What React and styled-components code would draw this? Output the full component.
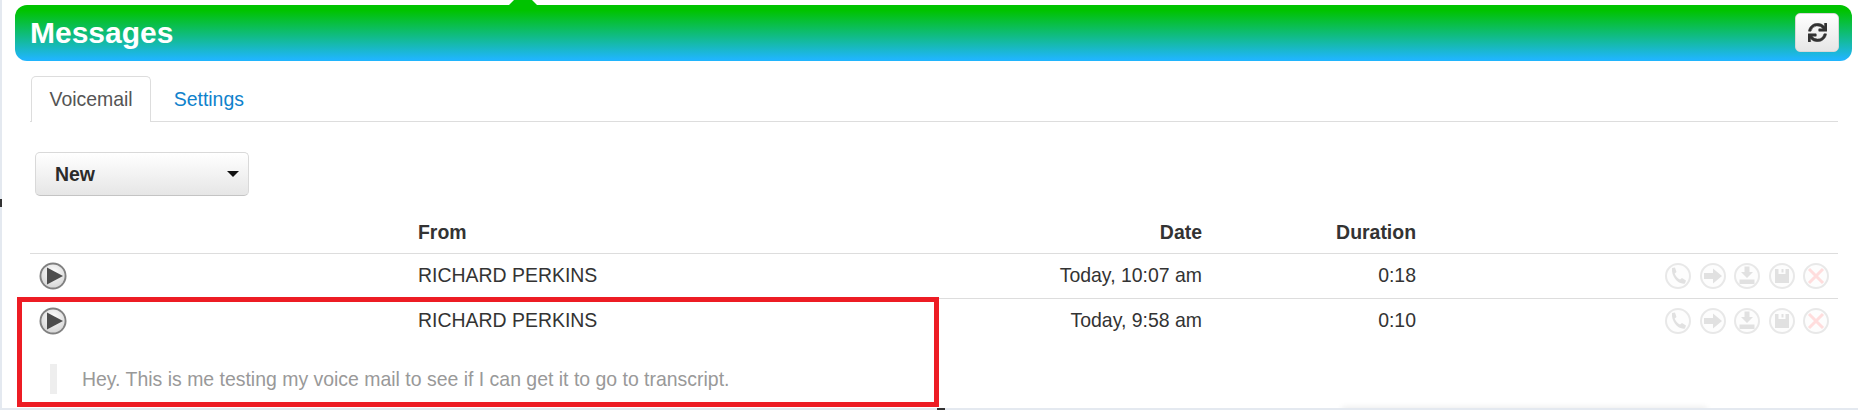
import React from "react";
import styled, { createGlobalStyle } from "styled-components";
import { FaSync } from "react-icons/fa";

const GlobalStyle = createGlobalStyle`
  html, body {
    margin: 0;
    padding: 0;
    background: #e4e9f0;
    overflow: hidden;
  }
  body {
    font-family: "Liberation Sans", Arial, sans-serif;
    font-size: 19.45px;
    color: #333;
  }
`;

const Screen = styled.div`
  position: relative;
  width: 1858px;
  height: 410px;
  padding-left: 2px;
  box-sizing: border-box;
`;

const Page = styled.div`
  position: relative;
  width: 1856px;
  height: 408px;
  background: #fff;
  padding: 5px 6px 0 13px;
  box-sizing: border-box;
  overflow: hidden;
`;

const Header = styled.div`
  position: relative;
  height: 56px;
  border-radius: 12px;
  background: linear-gradient(#00c300 10%, #20b5fd 97%);
  display: flex;
  align-items: center;
  justify-content: space-between;
  padding: 0 13px 0 15px;
`;

const Notch = styled.span`
  position: absolute;
  top: -14px;
  left: 489px;
  border-left: 19px solid transparent;
  border-right: 19px solid transparent;
  border-bottom: 19px solid #00c300;
`;

const Title = styled.h1`
  margin: 0;
  font-size: 30px;
  font-weight: bold;
  color: #fff;
`;

const RefreshButton = styled.button`
  width: 44px;
  height: 39px;
  margin-top: -1px;
  padding: 0;
  border: 1px solid #d8d8d8;
  border-radius: 5px;
  background: linear-gradient(#fff, #e6e6e6);
  color: #333;
  display: flex;
  align-items: center;
  justify-content: center;
  font-size: 19px;
  svg {
    stroke: #333;
    stroke-width: 12px;
  }
`;

const Body = styled.div`
  margin-right: 14px;
  padding-left: 15px;
`;

const Tabs = styled.div`
  display: flex;
  gap: 4px;
  height: 61px;
  padding: 15px 0 0 1px;
  box-sizing: border-box;
  border-bottom: 1px solid #ddd;
`;

const Tab = styled.div`
  height: 46px;
  padding: 0 17.5px;
  box-sizing: border-box;
  display: flex;
  align-items: center;
  color: ${(p) => (p.$active ? "#555" : "#0f82cc")};
  background: ${(p) => (p.$active ? "#fff" : "transparent")};
  border: 1px solid ${(p) => (p.$active ? "#ddd" : "transparent")};
  border-bottom: none;
  border-radius: 5px 5px 0 0;
`;

const Select = styled.div`
  width: 214px;
  height: 44px;
  margin: 30px 0 0 5px;
  padding: 0 9px 0 19px;
  box-sizing: border-box;
  display: flex;
  align-items: center;
  justify-content: space-between;
  border: 1px solid #d9d9d9;
  border-bottom-color: #c4c4c4;
  border-radius: 5px;
  background: linear-gradient(#fff, #e6e6e6);
  font-weight: bold;
  color: #2b2b2b;
`;

const Caret = styled.span`
  border-left: 6px solid transparent;
  border-right: 6px solid transparent;
  border-top: 6px solid #111;
`;

const Table = styled.div`
  margin-top: 18px;
`;

const Row = styled.div`
  display: grid;
  grid-template-columns: 388px 400px 384px 214px 1fr;
  height: ${(p) => (p.$head ? "40px" : "45px")};
  padding-bottom: ${(p) => (p.$head ? "2px" : "1px")};
  align-items: center;
  border-bottom: 1px solid ${(p) => (p.$last ? "transparent" : "#ddd")};
  font-weight: ${(p) => (p.$head ? "bold" : "normal")};
  box-sizing: border-box;
`;

const RightCell = styled.div`
  text-align: right;
`;

const PlayCell = styled.div`
  padding-left: 9px;
  display: flex;
`;

const Actions = styled.div`
  display: flex;
  justify-content: flex-end;
  gap: 8.5px;
  padding-right: 9px;
  opacity: 0.13;
  filter: blur(0.6px);
`;

const Transcript = styled.div`
  margin: 20px 0 0 20px;
  height: 30px;
  padding-left: 25px;
  border-left: 7px solid #eee;
  display: flex;
  align-items: center;
  color: #999;
`;

const Highlight = styled.div`
  position: absolute;
  left: 15px;
  top: 297px;
  width: 922px;
  height: 110px;
  box-sizing: border-box;
  border: 5px solid #ed1c24;
  pointer-events: none;
`;

const Handle = styled.span`
  position: absolute;
  left: ${(p) => p.$x}px;
  top: ${(p) => p.$y}px;
  width: ${(p) => p.$w}px;
  height: ${(p) => p.$h}px;
  background: #333;
`;

const FooterShadow = styled.div`
  position: absolute;
  left: 1340px;
  bottom: -4px;
  width: 365px;
  height: 4px;
  box-shadow: 0 0 6px rgba(0, 0, 0, 0.12);
`;

const PlayIcon = () => (
  <svg width="28" height="28" viewBox="0 0 28 28">
    <defs>
      <radialGradient id="playFace" cx="50%" cy="35%" r="70%">
        <stop offset="0%" stopColor="#fff" />
        <stop offset="100%" stopColor="#d4d4d4" />
      </radialGradient>
    </defs>
    <circle cx="14" cy="14" r="13.5" fill="#808080" />
    <circle cx="14" cy="14" r="11.6" fill="url(#playFace)" />
    <path d="M8 5.5 L24 14 L8 22.5 Z" fill="#4d4d4d" />
  </svg>
);

const ActionIcon = ({ children }) => (
  <svg width="26" height="26" viewBox="0 0 26 26">
    <circle cx="13" cy="13" r="12" fill="#f4f4f4" stroke="#555" strokeWidth="2" />
    {children}
  </svg>
);

const RowActions = () => (
  <Actions>
    <ActionIcon>
      <path d="M7 5 L10 4.5 L11.5 9 L9.7 10.5 C10.5 13 12.5 15.3 15 16.5 L17 15 L21 17.5 L20 20.5 C14 22 6 14 7 5 Z" fill="#222" />
    </ActionIcon>
    <ActionIcon>
      <path d="M4 10 H13 V5.5 L22 13 L13 20.5 V16 H4 Z" fill="#222" />
    </ActionIcon>
    <ActionIcon>
      <path d="M10.5 3.5 H15.5 V9 H19 L13 15 L7 9 H10.5 Z M5.5 16.5 H20.5 V21 H5.5 Z" fill="#222" />
    </ActionIcon>
    <ActionIcon>
      <path d="M6 6 H20 V20 H6 Z M9.5 6 V11 H16.5 V6 H14.5 V9.5 H12.5 V6 Z" fill="#222" fillRule="evenodd" />
    </ActionIcon>
    <ActionIcon>
      <path d="M6 6 L20 20 M20 6 L6 20" stroke="#ff0000" strokeWidth="3" fill="none" />
    </ActionIcon>
  </Actions>
);

const messages = [
  { from: "RICHARD PERKINS", date: "Today, 10:07 am", duration: "0:18" },
  {
    from: "RICHARD PERKINS",
    date: "Today, 9:58 am",
    duration: "0:10",
    transcript: "Hey. This is me testing my voice mail to see if I can get it to go to transcript.",
  },
];

export default function App() {
  return (
    <>
      <GlobalStyle />
      <Screen>
        <Page>
          <Header>
            <Notch />
            <Title>Messages</Title>
            <RefreshButton>
              <FaSync />
            </RefreshButton>
          </Header>
          <Body>
            <Tabs>
              <Tab $active>Voicemail</Tab>
              <Tab>Settings</Tab>
            </Tabs>
            <Select>
              New
              <Caret />
            </Select>
            <Table>
              <Row $head>
                <div />
                <div>From</div>
                <RightCell>Date</RightCell>
                <RightCell>Duration</RightCell>
                <div />
              </Row>
              {messages.map((m, i) => (
                <div key={i}>
                  <Row $last={i === messages.length - 1}>
                    <PlayCell>
                      <PlayIcon />
                    </PlayCell>
                    <div>{m.from}</div>
                    <RightCell>{m.date}</RightCell>
                    <RightCell>{m.duration}</RightCell>
                    <RowActions />
                  </Row>
                  {m.transcript && <Transcript>{m.transcript}</Transcript>}
                </div>
              ))}
            </Table>
          </Body>
          <Highlight />
          <FooterShadow />
        </Page>
        <Handle $x={0} $y={199} $w={2} $h={8} />
        <Handle $x={937} $y={408} $w={8} $h={2} />
      </Screen>
    </>
  );
}
